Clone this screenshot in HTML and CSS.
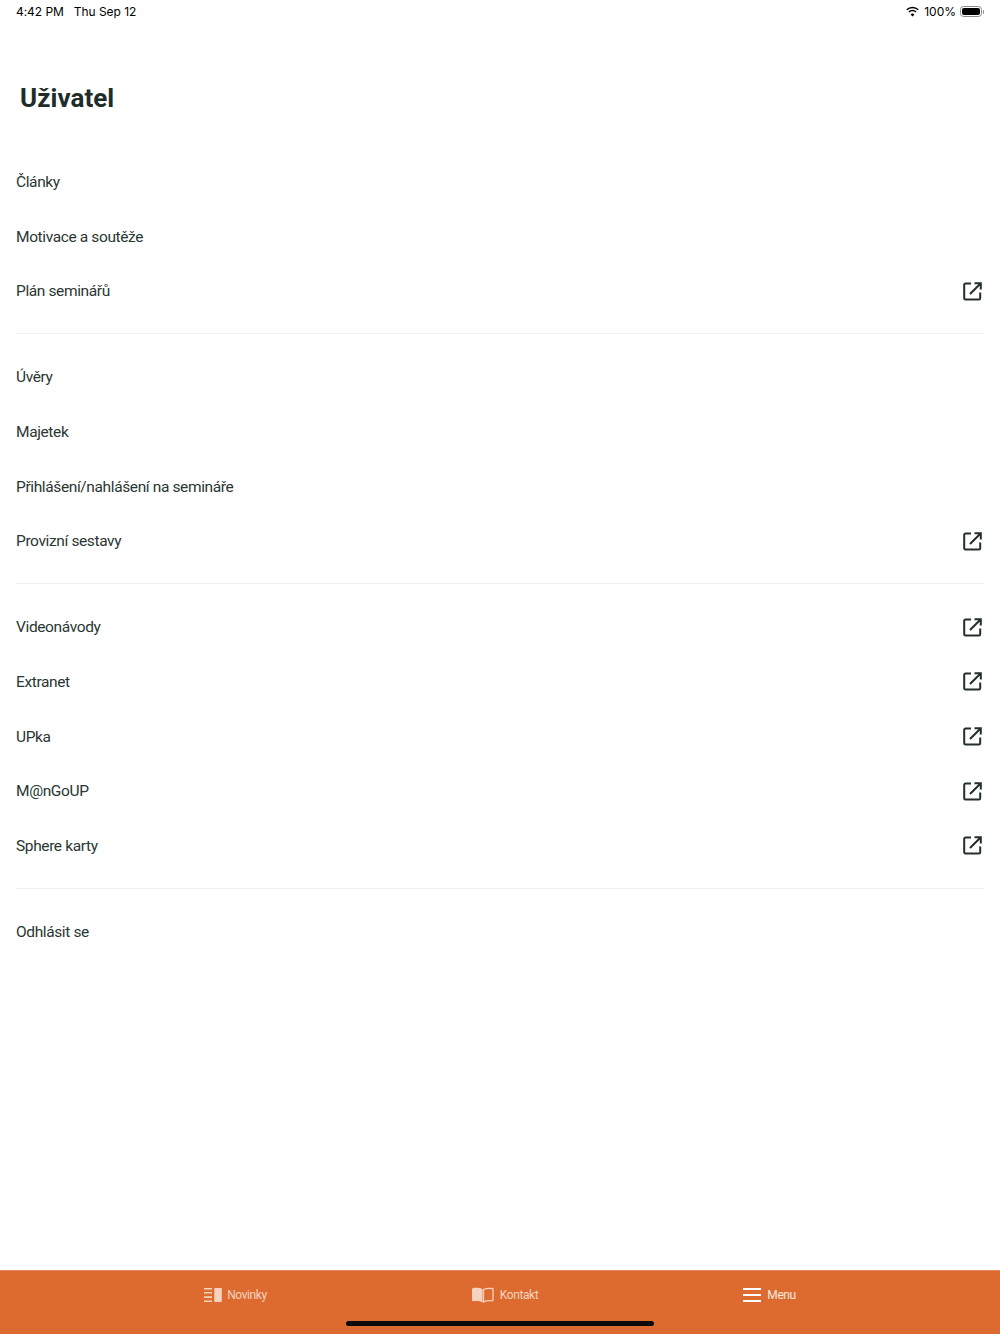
FILE: index.html
```html
<!DOCTYPE html>
<html lang="cs">
<head>
<meta charset="utf-8">
<title>Uživatel</title>
<link rel="stylesheet" href="styles.css">
</head>
<body>
<svg class="defs" width="0" height="0" aria-hidden="true">
  <symbol id="ext" viewBox="0 0 19 19">
    <path d="M8 1.500H2.500a1.300 1.300 0 0 0-1.300 1.300v13.400a1.300 1.300 0 0 0 1.300 1.300h13.400a1.300 1.300 0 0 0 1.300-1.300V10.500" fill="none" stroke="currentColor" stroke-width="2"/>
    <path d="M11.500 1.200h6.300v6.300M17.300 1.700 7 12" fill="none" stroke="currentColor" stroke-width="2"/>
  </symbol>
</svg>
<div class="app">
  <header class="status">
    <div class="status-left"><span>4:42 PM</span><span>Thu Sep 12</span></div>
    <div class="status-right">
      <svg class="wifi" width="15" height="11" viewBox="0 0 15 11"><path d="M7.500 2.200c2 0 3.900.8 5.300 2.100l1-1.100A9.200 9.200 0 0 0 7.500.7 9.200 9.200 0 0 0 1.200 3.200l1 1.100a7.700 7.700 0 0 1 5.300-2.100Z"/><path d="M7.500 5.300c1.200 0 2.200.4 3.100 1.200l1-1.100a6 6 0 0 0-8.200 0l1 1.100c.9-.8 1.900-1.200 3.100-1.200Z"/><path d="M7.500 10.500 9.400 8.500a2.800 2.800 0 0 0-3.800 0Z"/></svg>
      <span>100%</span>
      <span class="battery"><span class="battery-fill"></span></span>
    </div>
  </header>
  <h1 class="title">Uživatel</h1>
  <main class="menu">
    <section class="group">
      <a class="row">Články</a>
      <a class="row">Motivace a soutěže</a>
      <a class="row">Plán seminářů<svg class="ext"><use href="#ext"/></svg></a>
    </section>
    <section class="group">
      <a class="row">Úvěry</a>
      <a class="row">Majetek</a>
      <a class="row">Přihlášení/nahlášení na semináře</a>
      <a class="row">Provizní sestavy<svg class="ext"><use href="#ext"/></svg></a>
    </section>
    <section class="group">
      <a class="row">Videonávody<svg class="ext"><use href="#ext"/></svg></a>
      <a class="row">Extranet<svg class="ext"><use href="#ext"/></svg></a>
      <a class="row">UPka<svg class="ext"><use href="#ext"/></svg></a>
      <a class="row">M@nGoUP<svg class="ext"><use href="#ext"/></svg></a>
      <a class="row">Sphere karty<svg class="ext"><use href="#ext"/></svg></a>
    </section>
    <section class="group">
      <a class="row">Odhlásit se</a>
    </section>
  </main>
  <nav class="tabbar">
    <a class="tab">
      <svg width="18" height="14" viewBox="0 0 18 14"><path d="M0 0h8v1.600H0zM0 4h8v1.600H0zM0 8.300h8v1.600H0zM0 12.400h8V14H0z"/><rect x="10.300" y="0" width="7.500" height="14" rx=".8"/></svg>
      <span>Novinky</span>
    </a>
    <a class="tab tab-book">
      <svg width="22" height="16" viewBox="0 0 22 16"><path d="M10.500 2.200C9 .9 5 .6 1.200.9.500 1 0 1.500 0 2.200v10.900c0 .7.600 1.200 1.300 1.100 3.400-.3 7.300 0 9.200 1.400Z"/><path d="M11.500 2.700c1.500-1.100 5-1.500 8.800-1.200.4 0 .7.300.7.700v10.900c0 .4-.3.700-.7.700-3.400-.2-7.200.1-8.800 1.200Z" fill="none" stroke="currentColor" stroke-width="1.300"/></svg>
      <span>Kontakt</span>
    </a>
    <a class="tab tab-active">
      <svg width="18" height="14" viewBox="0 0 18 14"><path d="M0 0h18v2H0zM0 6h18v2H0zM0 12h18v2H0z"/></svg>
      <span>Menu</span>
    </a>
    <span class="home"></span>
  </nav>
</div>
</body>
</html>
```
FILE: styles.css
```css
* { box-sizing: border-box; }
html, body { margin: 0; height: 100%; }
body { background: #fff; font-family: Roboto, "Noto Sans", sans-serif; color: #232f2c; }
.defs { position: absolute; }
.app { height: 1334px; display: flex; flex-direction: column; position: relative; overflow: hidden; }
.status { height: 23px; padding: 0 16px; display: flex; justify-content: space-between; align-items: center; font-family: Inter, "Liberation Sans", sans-serif; font-size: 12px; color: #000; }
.status-left { display: flex; gap: 10px; letter-spacing: -0.05px; }
.status-right { display: flex; align-items: center; gap: 4px; }
.wifi { fill: #000; }
.battery { width: 22px; height: 11px; border: 1px solid #8a8a8a; border-radius: 3.500px; padding: 1px; position: relative; margin-right: 2px; }
.battery::after { content: ""; position: absolute; right: -3px; top: 2.500px; width: 1.500px; height: 4px; background: #8a8a8a; border-radius: 0 1px 1px 0; }
.battery-fill { display: block; height: 100%; background: #000; border-radius: 2px; }
.title { margin: 0; padding: 54px 20px 0; font-size: 26px; line-height: 42px; font-weight: 700; color: #1f2d2a; letter-spacing: 0.05px; }
.menu { flex: 1; padding: 35.700px 16px 0; }
.group { padding-bottom: 14.600px; margin-bottom: 15.730px; border-bottom: 1px solid #f1eeee; }
.group:last-child { border-bottom: 0; }
.row { height: 54.670px; display: flex; align-items: center; justify-content: space-between; font-size: 15.500px; letter-spacing: -0.38px; color: #2a3633; }
.ext { width: 19px; height: 19px; margin-right: 2px; color: #232f2c; }
.tabbar { height: 64px; flex: none; background: #dd6b2f; border-top: 1px solid #e58c5c; display: flex; justify-content: center; gap: 205px; padding-top: 15px; position: relative; }
.tab { display: flex; align-items: center; gap: 5px; font-size: 12px; letter-spacing: -0.4px; line-height: 18px; color: #f6d3bf; fill: #f6d3bf; height: 18px; }
.tab-book, .tab-active { gap: 6px; }
.tab-active { color: #fde9dd; fill: #fff; }
.home { position: absolute; left: 346px; bottom: 8px; width: 308px; height: 5px; background: #0b0b0b; border-radius: 3px; }
```
